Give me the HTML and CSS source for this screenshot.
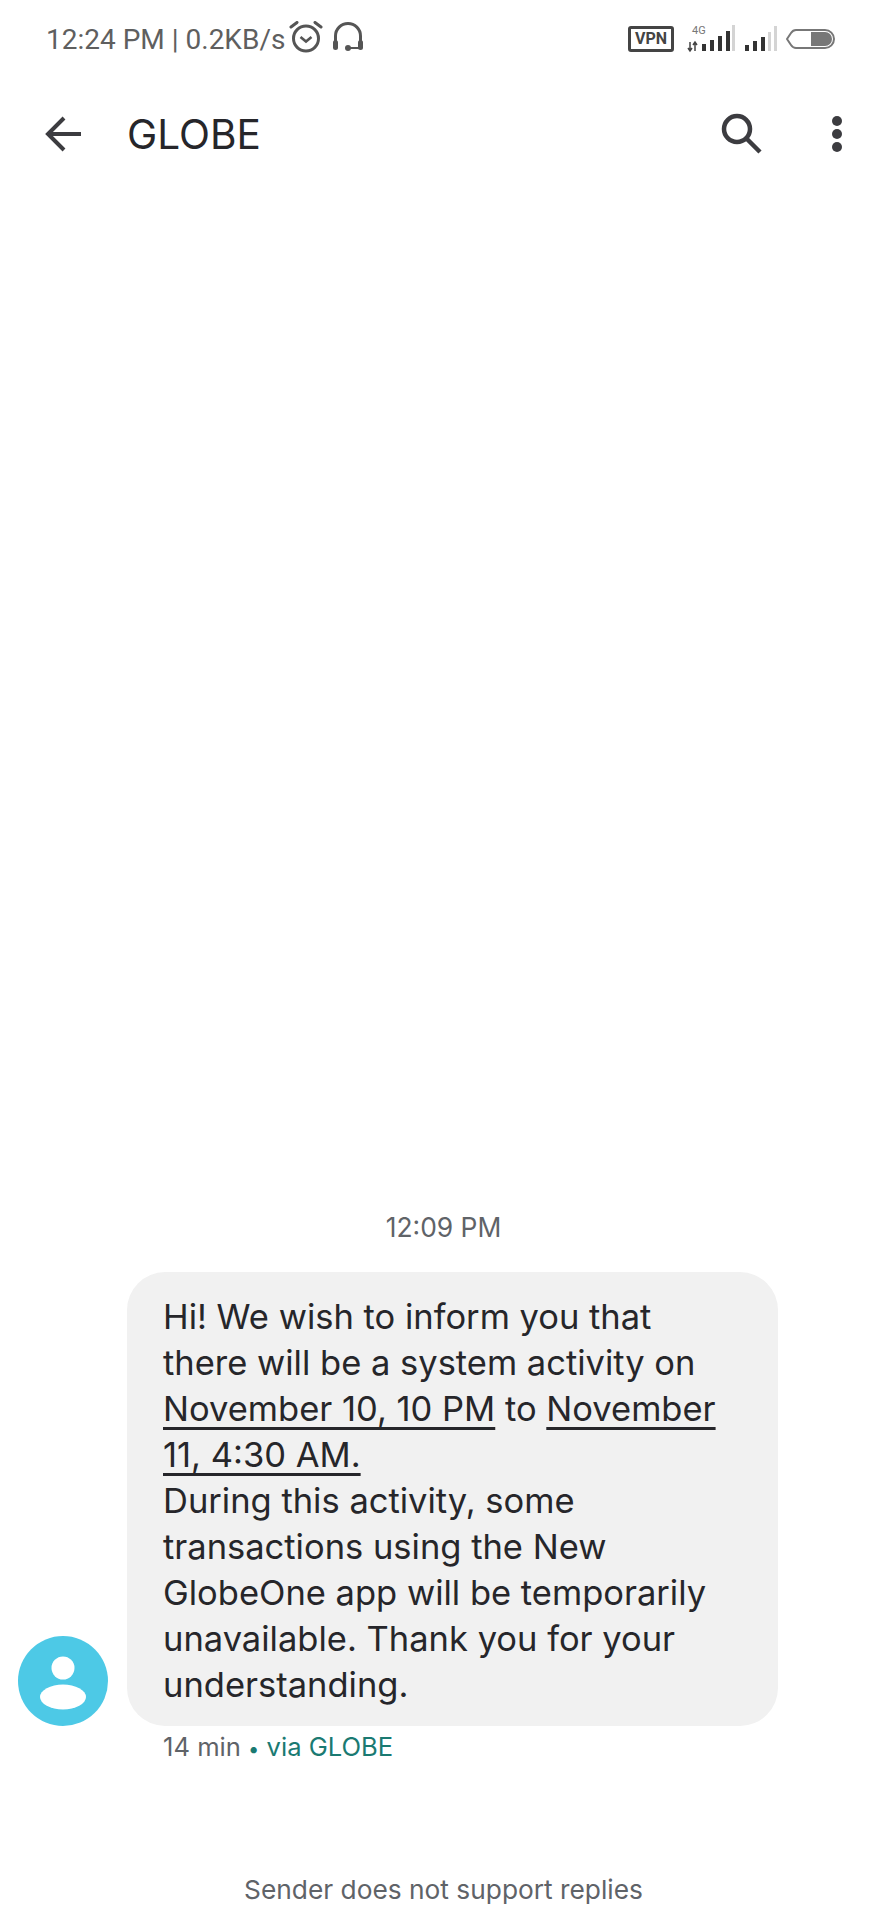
FILE: index.html
```html
<!DOCTYPE html>
<html lang="en">
<head>
  <meta charset="UTF-8" />
  <title>GLOBE</title>
  <link rel="stylesheet" href="styles.css">
</head>
<body>
  <div class="phone">
    <div class="status-bar">
      <span class="status-text">12:24 PM | 0.2KB/s</span>
      <svg class="alarm" width="34" height="32" viewBox="0 0 34 32" fill="none" stroke="#555" stroke-width="3">
        <circle cx="17" cy="17.500" r="12.500"/>
        <path d="M11.500 16l5.500 4.500 5.500-4.500" stroke-width="2.600"/>
        <path d="M2 6l6-4.500M32 6l-6-4.500" stroke-linecap="round"/>
      </svg>
      <svg class="headset" width="32" height="30" viewBox="0 0 32 30" fill="none" stroke="#555" stroke-width="3">
        <path d="M3.500 22V14a12.500 12.500 0 0 1 25 0v8"/>
        <rect x="1" y="18" width="5" height="10" rx="2.500" fill="#555" stroke="none"/>
        <rect x="26" y="18" width="5" height="10" rx="2.500" fill="#555" stroke="none"/>
        <circle cx="16" cy="26" r="3" fill="#555" stroke="none"/>
        <path d="M16 26h13" stroke-width="2"/>
      </svg>
      <div class="status-right">
        <span class="vpn">VPN</span>
        <svg width="50" height="30" viewBox="0 0 50 30">
          <text x="6" y="10" class="net">4G</text>
          <path d="M4 18v9M2 24l2 3 2-3M9 27v-9M7 21l2-3 2 3" stroke="#444" stroke-width="1.500" fill="none"/>
          <rect x="16" y="20" width="4" height="7" fill="#333"/>
          <rect x="24" y="16" width="4" height="11" fill="#333"/>
          <rect x="32" y="12" width="4" height="15" fill="#333"/>
          <rect x="40" y="7" width="4" height="20" fill="#333"/>
          <rect x="46" y="1" width="3" height="26" fill="#d4d4d4"/>
        </svg>
        <svg class="sim2" width="34" height="30" viewBox="0 0 34 30">
          <rect x="1" y="21" width="4" height="6" fill="#333"/>
          <rect x="9" y="17" width="4" height="10" fill="#333"/>
          <rect x="17" y="13" width="4" height="14" fill="#333"/>
          <rect x="24" y="8" width="3" height="19" fill="#d4d4d4"/>
          <rect x="30" y="2" width="3" height="25" fill="#d4d4d4"/>
        </svg>
        <svg class="battery" width="50" height="26" viewBox="0 0 50 26">
          <path d="M1 13l4-6q2-3 5-3h29a9 9 0 0 1 0 18H10q-3 0-5-3z" fill="#fff" stroke="#777" stroke-width="2"/>
          <path d="M25 6h14a7 7 0 0 1 0 14H25z" fill="#777"/>
        </svg>
      </div>
    </div>

    <div class="toolbar">
      <svg class="back" width="40" height="36" viewBox="0 0 40 36" fill="none" stroke="#3c3c40" stroke-width="4">
        <path d="M37 18H4M20 2L4 18l16 16"/>
      </svg>
      <h1 class="title">GLOBE</h1>
      <svg class="search" width="42" height="42" viewBox="0 0 42 42" fill="none" stroke="#3c3c40" stroke-width="4.500">
        <circle cx="16" cy="16" r="13"/>
        <path d="M25.500 25.500L39 39"/>
      </svg>
      <div class="more">
        <span class="dot"></span>
        <span class="dot"></span>
        <span class="dot"></span>
      </div>
    </div>

    <div class="thread">
      <div class="time-label">12:09 PM</div>
      <div class="message-row">
        <div class="avatar">
          <svg width="90" height="90" viewBox="0 0 90 90">
            <circle cx="45" cy="45" r="45" fill="#4dc9e6"/>
            <circle cx="45" cy="32" r="11.500" fill="#fff"/>
            <ellipse cx="45" cy="61" rx="23" ry="12.500" fill="#fff"/>
          </svg>
        </div>
        <div class="bubble">
          Hi! We wish to inform you that<br>
          there will be a system activity on<br>
          <span class="link">November 10, 10 PM</span> to <span class="link">November</span><br>
          <span class="link">11, 4:30 AM.</span><br>
          During this activity, some<br>
          transactions using the New<br>
          GlobeOne app will be temporarily<br>
          unavailable. Thank you for your<br>
          understanding.
        </div>
      </div>
      <div class="meta">14 min <span class="sep">•</span> <span class="via">via GLOBE</span></div>
      <div class="no-reply">Sender does not support replies</div>
    </div>
  </div>
</body>
</html>
```

FILE: styles.css
```css
html, body {
  margin: 0;
  padding: 0;
  background: #fff;
}

.phone {
  width: 887px;
  height: 1920px;
  display: flex;
  flex-direction: column;
  overflow: hidden;
  font-family: Inter, Roboto, "Liberation Sans", sans-serif;
}

.status-bar {
  height: 78px;
  display: flex;
  align-items: center;
  padding: 0 51px 0 46px;
  color: #5f5f5f;
  font-family: Roboto, "Liberation Sans", sans-serif;
}

.status-text {
  font-size: 28px;
  margin-right: 4px;
}

.alarm {
  margin-right: 9px;
  margin-top: -4px;
}

.headset {
  margin-top: -4px;
}

.status-right {
  margin-left: auto;
  display: flex;
  align-items: center;
}

.vpn {
  border: 3px solid #444;
  border-radius: 3px;
  font-size: 16px;
  font-weight: 700;
  color: #444;
  padding: 1px 4px;
  line-height: 18px;
  margin-right: 12px;
}

.net {
  font-size: 11px;
  fill: #777;
}

.sim2 {
  margin-left: 8px;
}

.battery {
  margin-left: 8px;
}

.toolbar {
  height: 112px;
  display: flex;
  align-items: center;
  padding: 0 0 0 44px;
}

.back {
  margin-right: 43px;
}

.title {
  margin: 0;
  font-size: 40.500px;
  font-weight: 400;
  color: #26262a;
  flex: 1;
}

.search {
  margin-right: 69px;
}

.more {
  display: flex;
  flex-direction: column;
  gap: 3px;
  margin-right: 45px;
}

.dot {
  width: 10px;
  height: 10px;
  border-radius: 50%;
  background: #3c3c40;
}

.thread {
  flex: 1;
  display: flex;
  flex-direction: column;
  justify-content: flex-end;
}

.time-label {
  text-align: center;
  font-size: 26.400px;
  line-height: 30px;
  color: #5f6368;
  margin-bottom: 30px;
}

.message-row {
  display: flex;
  align-items: flex-end;
  padding-left: 18px;
}

.avatar {
  width: 90px;
  height: 90px;
  margin-right: 19px;
}

.bubble {
  width: 615px;
  padding: 22px 0 18px 36px;
  background: #f1f1f1;
  border-radius: 38px;
  font-size: 34.500px;
  line-height: 46px;
  color: #26262a;
}

.link {
  text-decoration: underline;
  text-decoration-thickness: 3px;
  text-underline-offset: 6px;
}

.meta {
  margin: 3px 0 0 163px;
  font-size: 25.600px;
  line-height: 36px;
  color: #5f6368;
}

.sep {
  color: #1a7a72;
  font-size: 20px;
}

.via {
  color: #1a7a72;
}

.no-reply {
  margin-top: 105px;
  padding-bottom: 12px;
  text-align: center;
  font-size: 26.300px;
  line-height: 36px;
  color: #5f6368;
}
```
